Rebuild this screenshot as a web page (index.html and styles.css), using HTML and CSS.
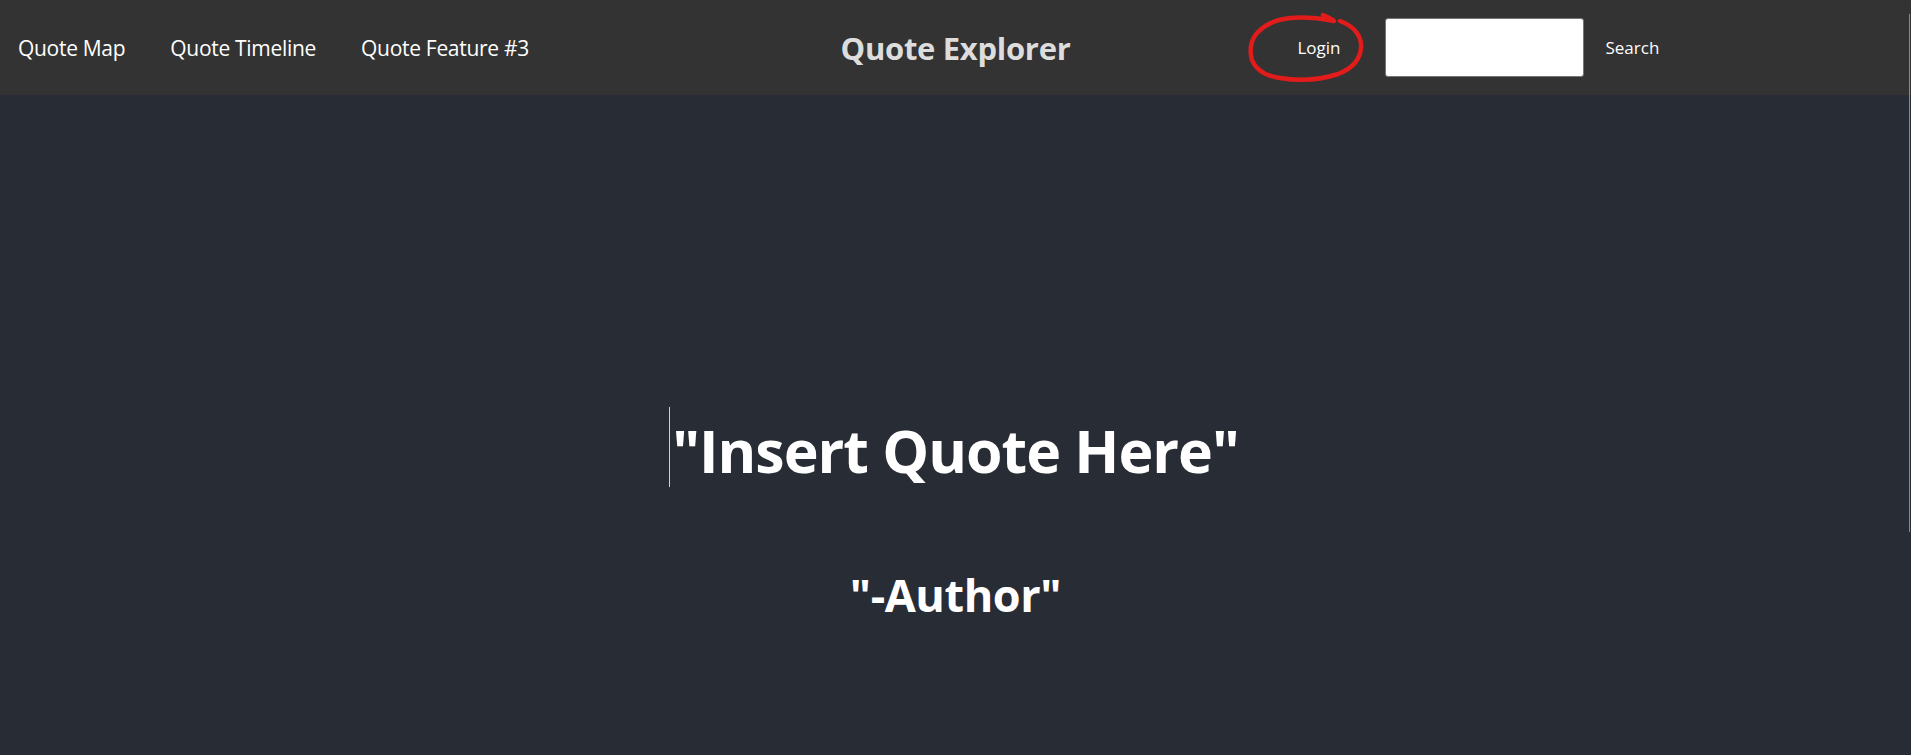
FILE: index.html
```html
<!DOCTYPE html>
<html lang="en">
<head>
<meta charset="utf-8">
<title>Quote Explorer</title>
<link rel="stylesheet" href="styles.css">
</head>
<body>
<div class="app">
  <header class="topbar">
    <nav class="nav-left">
      <a class="nav-link" href="#">Quote Map</a>
      <a class="nav-link" href="#">Quote Timeline</a>
      <a class="nav-link" href="#">Quote Feature #3</a>
    </nav>
    <div class="brand">Quote Explorer</div>
    <div class="nav-right">
      <span class="login-wrap">
        <a class="login" href="#">Login</a>
        <svg class="scribble" width="130" height="80" viewBox="0 0 130 80" aria-hidden="true">
          <path d="M75 3 C80 5 84 7 86 9 C70 6 55 5 43 6 C30 7 18 12 10 20 C3 27 1 38 4 48 C8 58 18 64 32 66 C50 69 72 68 90 62 C103 57 112 48 113 36 C114 24 106 14 92 9" fill="none" stroke="#e21b1b" stroke-width="4.5" stroke-linecap="round" stroke-linejoin="round"/>
        </svg>
      </span>
      <input class="search-input" type="text" aria-label="Search">
      <a class="search-link" href="#">Search</a>
    </div>
  </header>
  <main class="stage">
    <div class="quote-line">
      <span class="caret"></span>
      <h1 class="quote">"Insert Quote Here"</h1>
    </div>
    <h2 class="author">"-Author"</h2>
  </main>
  <div class="edge-bar"></div>
</div>
</body>
</html>
```
FILE: styles.css
```css
* { box-sizing: border-box; }
html, body { margin: 0; padding: 0; height: 100%; }
body {
  background: #282c34;
  font-family: "Open Sans", "Noto Sans", "Liberation Sans", sans-serif;
  color: #fff;
  overflow: hidden;
}
.app { position: relative; min-height: 755px; }
.topbar {
  height: 95px;
  background: #333333;
  display: grid;
  grid-template-columns: 1fr auto 1fr;
  align-items: center;
}
.nav-left {
  display: flex;
  align-items: center;
  gap: 45px;
  padding-left: 18px;
}
.nav-link {
  color: #ffffff;
  text-decoration: none;
  font-size: 21px;
  letter-spacing: -0.3px;
}
.brand {
  color: #dddddd;
  font-weight: 700;
  font-size: 31px;
  letter-spacing: -0.3px;
}
.nav-right {
  display: flex;
  align-items: center;
  padding-left: 227px;
}
.login-wrap { position: relative; display: inline-block; }
.login {
  color: #ffffff;
  text-decoration: none;
  font-size: 17px;
}
.scribble {
  position: absolute;
  left: -49px;
  top: -24px;
  pointer-events: none;
}
.search-input {
  margin-left: 44px;
  width: 199px;
  height: 59px;
  border: 1px solid #767676;
  border-radius: 3px;
  background: #fff;
}
.search-link {
  margin-left: 22px;
  color: #ffffff;
  text-decoration: none;
  font-size: 17px;
}
.stage {
  display: flex;
  flex-direction: column;
  align-items: center;
  padding-top: 312px;
}
.quote-line {
  display: flex;
  align-items: flex-start;
  margin-left: -3px;
}
.caret {
  width: 1px;
  height: 80px;
  background: #d0d0d0;
  margin-right: 2px;
}
.quote {
  margin: 3px 0 0;
  font-size: 59px;
  font-weight: 700;
  letter-spacing: -1px;
  line-height: 81px;
}
.author {
  margin: 76px 0 0;
  font-size: 45px;
  font-weight: 700;
  letter-spacing: -0.4px;
  line-height: 56px;
}
.edge-bar {
  position: absolute;
  right: 1px;
  top: 14px;
  width: 1px;
  height: 518px;
  background: #8a8a8a;
}
```
